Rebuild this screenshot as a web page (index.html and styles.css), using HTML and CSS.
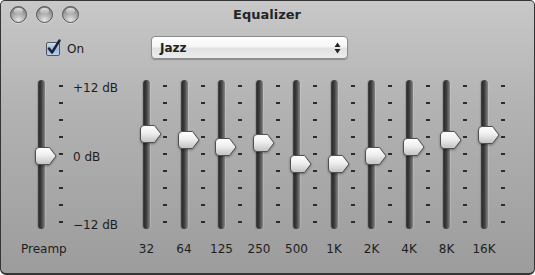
FILE: index.html
```html
<!DOCTYPE html>
<html>
<head>
<meta charset="utf-8">
<link rel="stylesheet" href="styles.css">
</head>
<body>
<div class="window">
  <div class="titlebar">
    <div class="lights"><span class="light"></span><span class="light"></span><span class="light"></span></div>
    <div class="title">Equalizer</div>
  </div>
  <div class="controls">
    <label class="check">
      <span class="box"><svg width="16" height="17" viewBox="0 0 16 17"><defs><linearGradient id="cb" x1="0" y1="0" x2="0" y2="1"><stop offset="0" stop-color="#d6e3f3"/><stop offset="0.5" stop-color="#9bb7da"/><stop offset="1" stop-color="#bed2ec"/></linearGradient></defs><rect x="0.5" y="3.5" width="13" height="13" rx="1.5" fill="url(#cb)" stroke="#4d5666"/><path d="M3 9.5 L6 13.5 L13.5 1.5" fill="none" stroke="#1b2136" stroke-width="2.4" stroke-linecap="round" stroke-linejoin="round"/></svg></span>
      <span class="check-text">On</span>
    </label>
    <div class="popup">
      <span class="popup-text">Jazz</span>
      <svg class="arrows" width="7" height="12" viewBox="0 0 7 12"><path d="M3.5 0.5 L6.5 5 H0.5Z M3.5 11.5 L6.5 7 H0.5Z" fill="#222"/></svg>
    </div>
  </div>
  <div class="eq">
    <div class="preamp">
      <div class="slider">
        <div class="track"><div class="thumb" style="top:66.5px"><svg width="22" height="18" viewBox="0 0 22 18"><use href="#thumbshape"/></svg></div></div>
        <div class="ticks"><i></i><i></i><i></i><i></i><i></i><i></i><i></i><i></i><i></i></div>
        <div class="scale"><span>+12 dB</span><span>0 dB</span><span>&minus;12 dB</span></div>
      </div>
      <div class="plabel">Preamp</div>
    </div>
    <div class="bands">
      <div class="band"><div class="slider"><div class="track"><div class="thumb" style="top:44.5px"><svg width="22" height="18" viewBox="0 0 22 18"><use href="#thumbshape"/></svg></div></div><div class="ticks"><i></i><i></i><i></i><i></i><i></i><i></i><i></i><i></i><i></i></div></div><div class="blabel"><span>32</span></div></div>
      <div class="band"><div class="slider"><div class="track"><div class="thumb" style="top:50.5px"><svg width="22" height="18" viewBox="0 0 22 18"><use href="#thumbshape"/></svg></div></div><div class="ticks"><i></i><i></i><i></i><i></i><i></i><i></i><i></i><i></i><i></i></div></div><div class="blabel"><span>64</span></div></div>
      <div class="band"><div class="slider"><div class="track"><div class="thumb" style="top:57.5px"><svg width="22" height="18" viewBox="0 0 22 18"><use href="#thumbshape"/></svg></div></div><div class="ticks"><i></i><i></i><i></i><i></i><i></i><i></i><i></i><i></i><i></i></div></div><div class="blabel"><span>125</span></div></div>
      <div class="band"><div class="slider"><div class="track"><div class="thumb" style="top:54px"><svg width="22" height="18" viewBox="0 0 22 18"><use href="#thumbshape"/></svg></div></div><div class="ticks"><i></i><i></i><i></i><i></i><i></i><i></i><i></i><i></i><i></i></div></div><div class="blabel"><span>250</span></div></div>
      <div class="band"><div class="slider"><div class="track"><div class="thumb" style="top:74.5px"><svg width="22" height="18" viewBox="0 0 22 18"><use href="#thumbshape"/></svg></div></div><div class="ticks"><i></i><i></i><i></i><i></i><i></i><i></i><i></i><i></i><i></i></div></div><div class="blabel"><span>500</span></div></div>
      <div class="band"><div class="slider"><div class="track"><div class="thumb" style="top:75px"><svg width="22" height="18" viewBox="0 0 22 18"><use href="#thumbshape"/></svg></div></div><div class="ticks"><i></i><i></i><i></i><i></i><i></i><i></i><i></i><i></i><i></i></div></div><div class="blabel"><span>1K</span></div></div>
      <div class="band"><div class="slider"><div class="track"><div class="thumb" style="top:66.5px"><svg width="22" height="18" viewBox="0 0 22 18"><use href="#thumbshape"/></svg></div></div><div class="ticks"><i></i><i></i><i></i><i></i><i></i><i></i><i></i><i></i><i></i></div></div><div class="blabel"><span>2K</span></div></div>
      <div class="band"><div class="slider"><div class="track"><div class="thumb" style="top:57.5px"><svg width="22" height="18" viewBox="0 0 22 18"><use href="#thumbshape"/></svg></div></div><div class="ticks"><i></i><i></i><i></i><i></i><i></i><i></i><i></i><i></i><i></i></div></div><div class="blabel"><span>4K</span></div></div>
      <div class="band"><div class="slider"><div class="track"><div class="thumb" style="top:50.5px"><svg width="22" height="18" viewBox="0 0 22 18"><use href="#thumbshape"/></svg></div></div><div class="ticks"><i></i><i></i><i></i><i></i><i></i><i></i><i></i><i></i><i></i></div></div><div class="blabel"><span>8K</span></div></div>
      <div class="band"><div class="slider"><div class="track"><div class="thumb" style="top:45.5px"><svg width="22" height="18" viewBox="0 0 22 18"><use href="#thumbshape"/></svg></div></div><div class="ticks"><i></i><i></i><i></i><i></i><i></i><i></i><i></i><i></i><i></i></div></div><div class="blabel"><span>16K</span></div></div>
    </div>
  </div>
</div>
<svg class="defs" width="0" height="0">
  <defs>
    <linearGradient id="thumbgrad" x1="0" y1="0" x2="0" y2="1">
      <stop offset="0" stop-color="#ffffff"/>
      <stop offset="0.45" stop-color="#eeeeee"/>
      <stop offset="1" stop-color="#c2c2c2"/>
    </linearGradient>
    <g id="thumbshape">
      <path d="M4 0.5 H14.5 L21 9 L14.5 17.5 H4 A3.5 3.5 0 0 1 0.5 14 V4 A3.5 3.5 0 0 1 4 0.5 Z" fill="url(#thumbgrad)" stroke="#505050" stroke-width="1"/>
    </g>
  </defs>
</svg>
</body>
</html>
```

FILE: styles.css
```css
html, body {
  margin: 0;
  padding: 0;
  background: #ffffff;
}

body {
  font-family: "DejaVu Sans", "Liberation Sans", sans-serif;
  color: #1e1e1e;
}

.defs {
  display: block;
  width: 0;
  height: 0;
  overflow: hidden;
}

.window {
  width: 535px;
  height: 275px;
  box-sizing: border-box;
  border: 1px solid #353535;
  border-bottom-width: 2px;
  border-radius: 5px 5px 6px 6px;
  background: linear-gradient(#c8c8c8 0%, #b2b2b2 40%, #9c9c9c 100%);
  overflow: hidden;
}

/* title bar */
.titlebar {
  display: grid;
  height: 28px;
}

.lights,
.title {
  grid-area: 1 / 1;
}

.lights {
  display: flex;
  gap: 9px;
  padding: 5px 0 0 9px;
  justify-self: start;
}

.light {
  position: relative;
  width: 17px;
  height: 17px;
  box-sizing: border-box;
  border-radius: 50%;
  border: 1px solid #555;
  background: radial-gradient(circle at 50% 88%, #e6e6e6 0%, #b4b4b4 38%, #858585 80%, #6e6e6e 100%);
  box-shadow: 0 1px 0 rgba(255, 255, 255, 0.35);
}

.light::after {
  content: "";
  position: absolute;
  left: 3px;
  right: 3px;
  top: 1px;
  height: 6px;
  border-radius: 50%;
  background: linear-gradient(rgba(255, 255, 255, 0.8), rgba(255, 255, 255, 0.05));
}

.title {
  justify-self: center;
  align-self: start;
  margin-top: 6px;
  font-size: 13px;
  line-height: 16px;
  font-weight: bold;
  color: #262626;
  margin-left: -1px;
}

/* controls */
.controls {
  display: flex;
  align-items: center;
  height: 23px;
  margin-top: 7px;
  padding-left: 45px;
}

.check {
  display: flex;
  align-items: center;
  width: 105px;
  margin-top: 2px;
}

.box {
  display: block;
  width: 16px;
  height: 17px;
  margin-top: -3px;
}

.box svg {
  display: block;
}

.check-text {
  font-size: 12px;
  line-height: 14px;
  margin-left: 5px;
  color: #1a1a1a;
}

.popup {
  display: flex;
  align-items: center;
  justify-content: space-between;
  width: 197px;
  height: 23px;
  box-sizing: border-box;
  border: 1px solid #8c8c8c;
  border-radius: 4px;
  background: linear-gradient(#ffffff 0%, #f6f6f6 45%, #e2e2e2 55%, #ececec 100%);
  box-shadow: 0 1px 1px rgba(0, 0, 0, 0.25);
  padding: 0 6px 0 8px;
}

.popup-text {
  font-size: 12px;
  font-weight: bold;
  line-height: 14px;
  color: #222;
}

.arrows {
  display: block;
}

/* equalizer */
.eq {
  display: flex;
  margin-top: 21px;
}

.preamp {
  width: 122px;
  margin-left: 20px;
  display: flex;
  flex-direction: column;
}

.preamp .slider {
  padding-left: 17px;
}

.slider {
  display: flex;
  height: 149px;
}

.track {
  position: relative;
  width: 7px;
  height: 149px;
  border-radius: 3.5px;
  background: linear-gradient(to right, #454545 0%, #2c2c2c 25%, #474747 55%, #6a6a6a 80%, #878787 100%);
  box-shadow: 1px 0 1px rgba(255, 255, 255, 0.15), -1px 0 1px rgba(0, 0, 0, 0.15);
}

.thumb {
  position: absolute;
  left: -3px;
  width: 22px;
  height: 18px;
  filter: drop-shadow(0 1px 1px rgba(0, 0, 0, 0.35));
}

.thumb svg {
  display: block;
}

.ticks {
  display: flex;
  flex-direction: column;
  gap: 15px;
  padding-top: 5px;
  margin-left: 13px;
}

.ticks i {
  display: block;
  width: 4px;
  height: 2px;
  background: #2c2c2c;
}

.preamp .ticks {
  margin-left: 14px;
}

.scale {
  display: flex;
  flex-direction: column;
  justify-content: space-between;
  height: 151px;
  margin-top: 1px;
  margin-left: 10px;
  font-size: 12px;
  line-height: 14px;
  white-space: nowrap;
  color: #1e1e1e;
}

.plabel {
  margin-top: 13px;
  font-size: 12px;
  line-height: 14px;
}

.bands {
  display: grid;
  grid-template-columns: repeat(10, 37.5px);
}

.band {
  display: flex;
  flex-direction: column;
}

.blabel {
  display: flex;
  justify-content: center;
  width: 7px;
  margin-top: 13px;
  font-size: 12px;
  line-height: 14px;
  white-space: nowrap;
}
```
